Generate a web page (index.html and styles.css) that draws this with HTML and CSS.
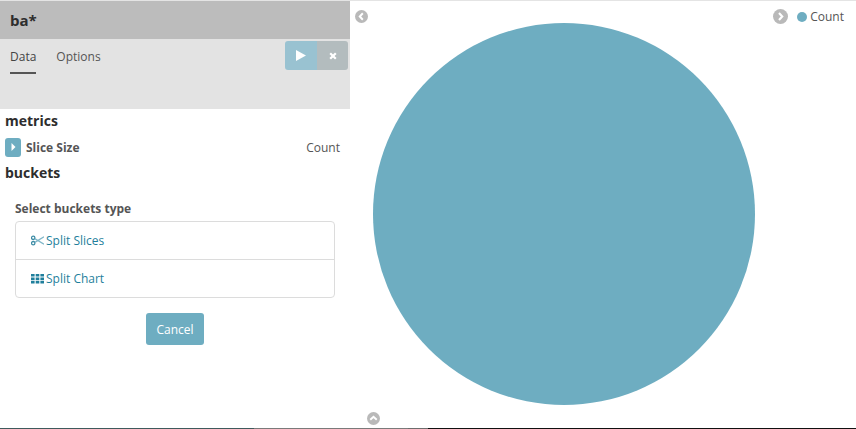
FILE: index.html
```html
<!DOCTYPE html>
<html lang="en">
  <head>
    <meta charset="UTF-8" />
    <meta name="viewport" content="width=device-width, initial-scale=1.0" />
    <title>Visualize - ba*</title>
    <link rel="stylesheet" href="styles.css">
  </head>
  <body>
    <div class="page">
      <aside class="sidebar">
        <div class="index-title">ba*</div>
        <div class="tabs-bar">
          <nav class="tabs">
            <a class="tab tab-active" href="#">Data</a>
            <a class="tab" href="#">Options</a>
          </nav>
          <div class="actions">
            <button class="btn-apply" type="button">
              <svg width="10" height="11" viewBox="0 0 10 11"><path d="M0 0L10 5.5L0 11Z" fill="#fff" /></svg>
            </button>
            <button class="btn-discard" type="button">
              <svg width="8" height="8" viewBox="0 0 8 8"><path d="M1.2 1.2L6.8 6.8M6.8 1.2L1.2 6.8" stroke="#fff" stroke-width="2.2" /></svg>
            </button>
          </div>
        </div>
        <div class="editor">
          <h2 class="section-title">metrics</h2>
          <div class="metric-row">
            <span class="toggle">
              <svg width="5" height="8" viewBox="0 0 5 8"><path d="M0.5 0L4.5 4L0.5 8Z" fill="#fff" /></svg>
            </span>
            <span class="metric-name">Slice Size</span>
            <span class="metric-value">Count</span>
          </div>
          <h2 class="section-title">buckets</h2>
          <div class="bucket-box">
            <div class="bucket-label">Select buckets type</div>
            <div class="bucket-list">
              <a class="bucket-item" href="#">
                <svg class="bucket-icon" width="13" height="11" viewBox="0 0 13 11">
                  <g fill="none" stroke-width="1.3">
                    <circle cx="2.2" cy="2.8" r="1.7" stroke="#3f8da6" />
                    <circle cx="2.2" cy="8.2" r="1.7" stroke="#3f8da6" />
                    <path d="M3.8 3.6L13 9.2M3.8 7.4L13 1.8" stroke="#7fb6c8" />
                  </g>
                </svg>
                Split Slices
              </a>
              <a class="bucket-item" href="#">
                <svg class="bucket-icon" width="13" height="11" viewBox="0 0 13 11" fill="#1f7f9c">
                  <path d="M0 1h3.6v2.6H0zM4.7 1h3.6v2.6H4.7zM9.4 1H13v2.6H9.4zM0 4.4h3.6V7H0zM4.7 4.4h3.6V7H4.7zM9.4 4.4H13V7H9.4zM0 7.8h3.6v2.6H0zM4.7 7.8h3.6v2.6H4.7zM9.4 7.8H13v2.6H9.4z" />
                </svg>
                Split Chart
              </a>
            </div>
            <button class="btn-cancel" type="button">Cancel</button>
          </div>
        </div>
      </aside>
      <main class="chart-area">
        <span class="nav-dot nav-left">
          <svg width="13" height="13" viewBox="0 0 12 12"><circle cx="6" cy="6" r="6" fill="#b9b9b9" /><path d="M7.2 3L4.4 6L7.2 9" fill="none" stroke="#fff" stroke-width="1.8" /></svg>
        </span>
        <svg class="pie" width="382" height="382" viewBox="0 0 382 382"><circle cx="191" cy="191" r="191" fill="#6eadc1" /></svg>
        <div class="legend">
          <svg width="15" height="15" viewBox="0 0 14 14"><circle cx="7" cy="7" r="7" fill="#b9b9b9" /><path d="M5.6 3.8L8.6 7L5.6 10.2" fill="none" stroke="#fff" stroke-width="2" /></svg>
          <span class="legend-dot"></span>
          <span class="legend-text">Count</span>
        </div>
        <span class="nav-dot nav-bottom">
          <svg width="13" height="13" viewBox="0 0 12 12"><circle cx="6" cy="6" r="6" fill="#b9b9b9" /><path d="M3 7.2L6 4.4L9 7.2" fill="none" stroke="#fff" stroke-width="1.8" /></svg>
        </span>
      </main>
    </div>
    <div class="bottom-strip">
      <span class="strip-dark"></span>
      <span class="strip-gray"></span>
      <span class="strip-notch"></span>
      <span class="strip-black"></span>
    </div>
  </body>
</html>
```

FILE: styles.css
```css
body {
  margin: 0;
  font-family: "Open Sans", sans-serif;
  background-color: #fff;
  color: #444;
  overflow: hidden;
}
.page {
  display: flex;
  height: 428px;
  box-sizing: border-box;
  border-top: 1px solid #e4e4e4;
}
.sidebar {
  width: 350px;
  flex-shrink: 0;
}
.index-title {
  height: 38px;
  line-height: 38px;
  padding-left: 10px;
  background-color: #bcbcbc;
  color: #2d2d2d;
  font-size: 15px;
  font-weight: 700;
}
.tabs-bar {
  display: flex;
  justify-content: space-between;
  align-items: flex-start;
  height: 70px;
  background-color: #e3e3e3;
}
.tabs {
  display: flex;
  gap: 20px;
  padding: 8px 0 0 10px;
}
.tab {
  display: block;
  height: 25px;
  line-height: 20px;
  font-size: 12px;
  color: #555;
  text-decoration: none;
}
.tab-active {
  color: #444;
  border-bottom: 2px solid #555;
}
.actions {
  display: flex;
  margin: 2px 2px 0 0;
}
.actions button {
  display: flex;
  align-items: center;
  justify-content: center;
  height: 29px;
  padding: 0;
  border: none;
}
.btn-apply {
  width: 32px;
  background-color: #99c2d1;
  border-radius: 3px 0 0 3px;
}
.btn-discard {
  width: 31px;
  background-color: #b3bcbe;
  border-radius: 0 3px 3px 0;
}
.editor {
  padding: 0 10px 0 5px;
}
.section-title {
  margin: 0;
  height: 26px;
  line-height: 24px;
  font-size: 14px;
  font-weight: 700;
  color: #2d2d2d;
}
.metric-row {
  display: flex;
  align-items: center;
  height: 26px;
  padding-bottom: 2px;
  box-sizing: border-box;
  font-size: 12px;
}
.toggle {
  display: flex;
  align-items: center;
  justify-content: center;
  width: 16px;
  height: 19px;
  margin-right: 5px;
  background-color: #6eadc1;
  border-radius: 3px;
}
.metric-name {
  flex: 1;
  font-weight: 700;
  color: #555;
}
.metric-value {
  color: #555;
}
.bucket-box {
  width: 320px;
  padding: 13px 0 0 10px;
}
.bucket-label {
  margin-bottom: 4px;
  font-size: 12px;
  line-height: 17px;
  font-weight: 700;
  color: #555;
}
.bucket-list {
  border: 1px solid #dcdcdc;
  border-radius: 4px;
}
.bucket-item {
  display: flex;
  align-items: center;
  gap: 2px;
  height: 37px;
  padding-left: 15px;
  font-size: 12px;
  color: #1f7f9c;
  text-decoration: none;
}
.bucket-item + .bucket-item {
  border-top: 1px solid #dcdcdc;
}
.btn-cancel {
  display: block;
  width: 58px;
  height: 32px;
  margin: 15px auto 0;
  padding: 0;
  border: none;
  border-radius: 3px;
  background-color: #6eadc1;
  color: #fff;
  font-family: inherit;
  font-size: 12px;
}
.chart-area {
  position: relative;
  flex: 1;
}
.pie {
  display: block;
  margin: 22px 0 0 23px;
}
.nav-dot {
  position: absolute;
  display: block;
  line-height: 0;
}
.nav-left {
  left: 5px;
  top: 9px;
}
.nav-bottom {
  left: 17px;
  bottom: 3px;
}
.legend {
  position: absolute;
  top: 7px;
  right: 12px;
  display: flex;
  align-items: center;
  font-size: 12px;
}
.legend-dot {
  width: 10px;
  height: 10px;
  margin: 0 3px 0 9px;
  border-radius: 50%;
  background-color: #6eadc1;
}
.legend-text {
  color: #555;
}
.bottom-strip {
  display: flex;
  height: 1px;
}
.strip-dark {
  width: 254px;
  background-color: #3f5a5c;
}
.strip-gray {
  width: 154px;
  background-color: #7a7a7a;
}
.strip-notch {
  width: 20px;
  background-color: #6d6d6d;
}
.strip-black {
  flex: 1;
  background-color: #111;
}
```
